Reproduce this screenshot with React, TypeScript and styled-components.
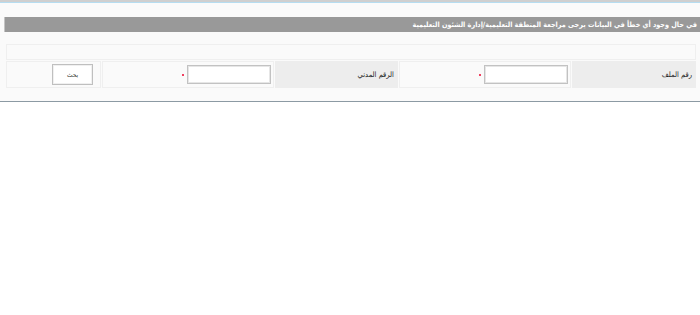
import React from 'react';
import styled, { createGlobalStyle } from 'styled-components';

const GlobalStyle = createGlobalStyle`
    html, body {
        margin: 0;
        padding: 0;
        background: #ffffff;
        font-family: Tahoma, "DejaVu Sans Condensed", "DejaVu Sans", sans-serif;
    }
`;

const Page = styled.div`
    direction: rtl;
    background: #fafafa;
    border-top: 2px solid #cfcfcf;
    border-bottom: 1px solid #8c9aa3;
    box-shadow: 0 1px 0 #a6cfe6;
`;

const TopLine = styled.div`
    height: 1px;
    background: #b5dcf0;
`;

const Content = styled.div`
    padding: 14px 0 13px 4px;
`;

const NoticeBar = styled.div`
    height: 15px;
    background: #999999;
    border-left: 1px solid #c4c4c4;
    color: #ffffff;
    font-family: "DejaVu Sans Condensed", "DejaVu Sans", sans-serif;
    font-size: 7.2px;
    font-weight: bold;
    line-height: 15px;
    padding-right: 3px;
    white-space: nowrap;
    overflow: hidden;
`;

const Grid = styled.div`
    display: grid;
    grid-template-columns: 124px 172px 123px 172px 1fr;
    gap: 1px;
    margin: 12px 4px 0 2px;
`;

const EmptyRow = styled.div`
    grid-column: 1 / -1;
    height: 14px;
    border: 1px solid #efefef;
    background: #fafafa;
`;

const Cell = styled.div<{ $label?: boolean }>`
    height: 25px;
    border: 1px solid ${(p) => (p.$label ? '#ededed' : '#efefef')};
    background: ${(p) => (p.$label ? '#ededed' : '#fafafa')};
    display: flex;
    align-items: center;
    gap: 3px;
`;

const Label = styled.span`
    font-family: "DejaVu Sans Condensed", "DejaVu Sans", sans-serif;
    font-size: 7.5px;
    color: #222222;
    padding-right: 3px;
`;

const Field = styled.input`
    width: 80px;
    height: 15px;
    margin-right: 2px;
    border: 1px solid #c2c2c2;
    box-shadow: inset 0 0 0 1px #e6e6e6;
    background: #ffffff;
    padding: 1px;
    outline: none;
`;

const Required = styled.span`
    width: 2px;
    height: 2px;
    background: #f04060;
    margin-top: 1px;
`;

const SearchButton = styled.button`
    width: 41px;
    height: 21px;
    margin-right: 7px;
    border: 1px solid #bfbfbf;
    box-shadow: inset 0 0 0 1px #f0f0f0;
    background: #ffffff;
    font-family: "DejaVu Sans Condensed", "DejaVu Sans", sans-serif;
    font-size: 6.5px;
    color: #333333;
    padding: 0;
`;

const App = (): React.ReactElement => {
    return (
        <Page>
            <GlobalStyle />
            <TopLine />
            <Content>
                <NoticeBar>في حال وجود أي خطأ في البيانات يرجى مراجعة المنطقة التعليمية/إدارة الشئون التعليمية</NoticeBar>
                <Grid>
                    <EmptyRow />
                    <Cell $label>
                        <Label>رقم الملف</Label>
                    </Cell>
                    <Cell>
                        <Field type="text" />
                        <Required />
                    </Cell>
                    <Cell $label>
                        <Label>الرقم المدني</Label>
                    </Cell>
                    <Cell>
                        <Field type="text" />
                        <Required />
                    </Cell>
                    <Cell>
                        <SearchButton>بحث</SearchButton>
                    </Cell>
                </Grid>
            </Content>
        </Page>
    );
};

export default App;
